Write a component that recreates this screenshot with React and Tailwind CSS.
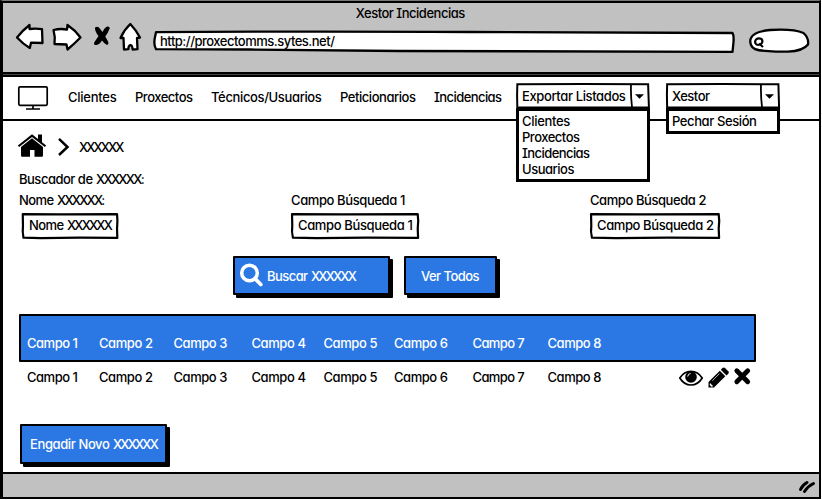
import { useLayoutEffect, useRef, useState } from "react";

/* One run of text whose tracking is tuned so that it fills `w` pixels. */
function T({ w, children, className = "" }) {
  const ref = useRef(null);
  const [gap, setGap] = useState(0);
  useLayoutEffect(() => {
    const natural = ref.current.getBoundingClientRect().width;
    setGap((w - 0.5 - natural) / children.length);
  }, []);
  return (
    <span className={`block h-4 shrink-0 whitespace-pre text-left leading-4 ${className}`} style={{ width: w }}>
      <span ref={ref} style={{ letterSpacing: gap }}>{children}</span>
    </span>
  );
}

/* Hand-drawn rectangle behind a field. */
function Sketch() {
  return (
    <svg className="absolute inset-0 h-full w-full overflow-visible" viewBox="0 0 100 100" preserveAspectRatio="none">
      <path
        d="M.8 4 L40 5 L99 4 Q99.800 30 99 60 L99.300 96 L60 95 L20 96.500 L1.500 95 Q.3 70 1 50Z"
        fill="#fff"
        stroke="#000"
        strokeWidth="2.200"
        strokeLinejoin="round"
        vectorEffect="non-scaling-stroke"
      />
    </svg>
  );
}

function Toolbar() {
  const line = { fill: "#fff", stroke: "#000", strokeWidth: 2.3, strokeLinejoin: "round" };
  return (
    <div className="flex h-9 shrink-0">
      <svg className="ml-[11px] h-9 w-8 shrink-0" viewBox="14 20 32 36">
        <path {...line} d="M17 37.5 Q23 30 29.5 25 L29.5 29 Q36 28.2 42 29.2 L42.5 43 L31 42.7 L29.8 48 Q23 44 17 37.5Z" />
      </svg>
      <svg className="ml-1 h-9 w-9 shrink-0" viewBox="50 20 36 36">
        <path {...line} d="M53.5 30 Q60 28.3 67 29.5 L67.5 25 Q75 30 80.5 37.5 Q74 44 67.5 49.5 L66.5 44.5 L54.5 44 Q55.5 37 53.5 30Z" />
      </svg>
      <svg className="ml-1 h-9 w-7 shrink-0" viewBox="90 20 28 36">
        <path d="M95 27.500 Q98 25.500 99.800 28.500 L102.500 32 Q104 28.500 106.500 26.800 Q109.500 26 109.800 28.300 Q108 33 105.300 36.500 L108.300 42 Q109 44.500 107 45 Q104.500 44 102 40.500 Q99.500 44.500 96.500 45 Q93.500 45.500 94.200 42.500 L98.500 36 Q94.500 31 95 27.500Z" />
      </svg>
      <svg className="h-9 w-7 shrink-0" viewBox="118 20 28 36">
        <path {...line} d="M130.300 24 Q136 30 140 37.500 L137 38 L137.500 49.200 L132.600 49.500 Q132.500 45.500 130.500 45 Q128.300 45.500 128.400 49.200 L124 49.500 L123.500 38 L120.500 38 Q124 30 130.300 24Z" />
      </svg>
      <div className="relative ml-[9px] mt-[11px] flex h-[21px] w-[579px] shrink-0 items-start pl-[5px] pt-[1.500px]">
        <svg className="absolute inset-0 h-full w-full overflow-visible" viewBox="155 31 579 21">
          <path {...line} d="M156 32.200 Q300 31 470 32 L732.500 33 Q734 35 733.500 42 L732.500 51.800 Q500 51.300 400 51 L250 49.500 L156 49.200 Q153.500 45 154.800 38Z" />
        </svg>
        <T w={175} className="relative">http://proxectomms.sytes.net/</T>
      </div>
      <svg className="ml-3.5 h-9 w-[64px] shrink-0" viewBox="748 20 64 36">
        <path {...line} d="M751 38 Q754 31.500 770 30 Q793 28.500 803.500 33 Q809 38 808 44.500 Q803 51 788 51.700 Q775 51.700 765 50.800 Q753 50.500 751 45 Q749.500 41 751 38Z" />
        <path d="M761.500 39 Q758.500 37.500 756 39.500 Q754 42.500 756.500 44.500 Q760 45.500 762 42.800 Q763 41 761.500 39Z M759 43.500 L763 47" fill="none" stroke="#000" strokeWidth="2.200" />
      </svg>
    </div>
  );
}

function Select({ label, labelW, options, box, menu, arrow }) {
  return (
    <div className={`relative h-[25px] shrink-0 ${box}`}>
      <svg className="absolute inset-0 h-full w-full overflow-visible" viewBox="0 0 100 100" preserveAspectRatio="none">
        <path d="M1 5 L50 4 L98.600 5 L99.200 98 L1 98 L.8 50Z" fill="#fff" stroke="#000" strokeWidth="2" vectorEffect="non-scaling-stroke" />
      </svg>
      <div className="relative flex h-[25px] pl-[6px] pt-[5px]">
        <T w={labelW}>{label}</T>
      </div>
      <svg className={`absolute top-0 h-[25px] w-[18px] ${arrow}`} viewBox="0 0 18 25">
        <path d="M1 1 Q.6 12 2 24" fill="none" stroke="#000" strokeWidth="1.800" />
        <path d="M5 11.300 H14 L9.500 15.800Z" />
      </svg>
      <div className={`absolute left-0 top-[25px] z-10 flex flex-col border-[3px] border-black bg-white pl-[3px] ${menu}`}>
        {options.map(([text, w]) => (
          <T key={text} w={w}>{text}</T>
        ))}
      </div>
    </div>
  );
}

function Nav() {
  return (
    <nav className="flex h-[44px] shrink-0 border-b-2 border-black">
      <svg className="ml-[14px] mt-[8px] h-[26px] w-8 shrink-0" viewBox="17 85 32 26">
        <rect x="18.800" y="86.900" width="28.400" height="18.400" rx="1.200" fill="#fff" stroke="#000" strokeWidth="1.700" />
        <path d="M33 105.500 V108.500 M26 109 H40" stroke="#000" strokeWidth="1.700" fill="none" />
      </svg>
      <div className="ml-[19px] flex pt-[12px]">
        <T w={49}>Clientes</T>
        <T w={58} className="ml-[18px]">Proxectos</T>
        <T w={111} className="ml-[18px]">Técnicos/Usuarios</T>
        <T w={76} className="ml-[18px]">Peticionarios</T>
        <T w={68} className="ml-[18px]">Incidencias</T>
      </div>
      <div className="ml-[14px] flex gap-4 pt-[6px]">
        <Select
          label="Exportar Listados"
          labelW={104}
          box="w-[134px]"
          arrow="left-[114px]"
          menu="h-[74px] w-[134px] pt-[2px]"
          options={[["Clientes", 48.500], ["Proxectos", 58], ["Incidencias", 68], ["Usuarios", 52.500]]}
        />
        <Select
          label="Xestor"
          labelW={38}
          box="w-[114px]"
          arrow="left-[94px]"
          menu="h-[26px] w-[114px] pt-[2px]"
          options={[["Pechar Sesión", 85]]}
        />
      </div>
    </nav>
  );
}

function Breadcrumb() {
  return (
    <div className="flex h-[26px] items-center">
      <svg className="ml-[13px] h-[26px] w-[30px] shrink-0" viewBox="17 133 30 26">
        <path d="M21 147 L32 138.200 L43 147 V155.500 Q43 156.700 41.800 156.700 H34.500 V150 H30 V156.700 H22.200 Q21 156.700 21 155.500Z" />
        <path d="M18.500 146.300 L32 135.600 L45.500 146.300" fill="none" stroke="#000" strokeWidth="2.100" />
        <path d="M38 134.500 H42 V143.500 L38 140.300Z" />
      </svg>
      <svg className="ml-[10px] h-[26px] w-3.5 shrink-0" viewBox="57 133 14 26">
        <path d="M59 138.800 L67.500 147 L59 155" fill="none" stroke="#000" strokeWidth="2.500" />
      </svg>
      <T w={44} className="ml-[8px] mt-0.5">XXXXXX</T>
    </div>
  );
}

function Field({ className, box, children }) {
  return (
    <div className={`relative h-[26px] shrink-0 ${className}`}>
      <Sketch />
      <div className={`relative flex pt-[4px] ${box}`}>{children}</div>
    </div>
  );
}

function Button({ className, children }) {
  return (
    <button className={`flex shrink-0 items-center rounded-[1px] border-2 border-black bg-[#2b78e4] text-white shadow-[3px_3px_0_#000] ${className}`}>
      {children}
    </button>
  );
}

const widths = [51, 54, 54, 54.500, 54, 54, 52, 54];
function Columns() {
  return (
    <div className="grid grid-cols-[72px_74.500px_78px_72px_70.500px_78.500px_75px_60px]">
      {widths.map((w, i) => (
        <T key={i} w={w}>{`Campo ${i + 1}`}</T>
      ))}
    </div>
  );
}

function RowActions() {
  return (
    <svg className="ml-auto mt-0.5 h-6 w-[74px] shrink-0" viewBox="678 367 74 24">
      <path d="M679.800 379 Q684 372.300 691 372.300 Q698 372.300 702.200 379 Q698 386 691 386 Q684 386 679.800 379Z" fill="#fff" stroke="#000" strokeWidth="1.700" />
      <circle cx="691" cy="378" r="5.800" />
      <path d="M687.700 377.500 Q688 374.800 690.600 374.500" fill="none" stroke="#fff" strokeWidth="1" />
      <path d="M708.500 388.500 V383 L719.800 371.700 L725.300 377.200 L714 388.500Z" />
      <path d="M720.800 370.700 L722.500 369 Q723.700 368 725 369 L728.300 372.300 Q729.300 373.500 728.300 374.700 L726.500 376.400Z" />
      <path d="M710 384 L713 387 L711.800 388 L709.700 386Z" fill="#fff" />
      <path d="M712.300 381.800 L719.500 374.600" stroke="#fff" strokeWidth=".7" />
      <path d="M736.800 371.800 L747.700 382.700 M747.700 371.800 L736.800 382.700" stroke="#000" strokeWidth="4.800" strokeLinecap="round" />
    </svg>
  );
}

export default function App() {
  return (
    <div className="flex h-[500px] w-[822px] flex-col overflow-hidden bg-white font-['Inter','Liberation_Sans',sans-serif] text-[13px] font-medium text-black [font-feature-settings:'cv11','cv08','calt'_0]">
      <div className="flex h-[499px] w-[821px] flex-col border-b-2 border-l-[3px] border-r-2 border-t border-black border-t-[#777]">
        <header className="flex h-[73px] shrink-0 flex-col border-b-2 border-t-2 border-black bg-[#c1c1c1]">
          <div className="flex h-[17px] justify-center pt-[2px]">
            <T w={109.500} className="mr-px">Xestor Incidencias</T>
          </div>
          <Toolbar />
        </header>
        <div className="h-[3px] shrink-0 border-b-2 border-black bg-[#444]" />
        <Nav />
        <main className="flex h-[351px] shrink-0 flex-col pl-px pt-[12px]">
          <Breadcrumb />
          <div className="ml-[15px] mt-[12px] flex">
            <T w={77}>Buscador de </T>
            <T w={47.500}>XXXXXX:</T>
          </div>
          <div className="ml-[15px] mt-[5px] grid grid-cols-[272px_299px_1fr]">
            <div className="flex">
              <T w={38}>Nome </T>
              <T w={47}>XXXXXX:</T>
            </div>
            <T w={114.500}>Campo Búsqueda 1</T>
            <T w={116.500}>Campo Búsqueda 2</T>
          </div>
          <div className="ml-[18px] mt-[5px] flex">
            <Field className="w-[96px]" box="pl-[7px]">
              <T w={38}>Nome </T>
              <T w={44.500}>XXXXXX</T>
            </Field>
            <Field className="ml-[173px] w-[128px]" box="pl-[7px]">
              <T w={115}>Campo Búsqueda 1</T>
            </Field>
            <Field className="ml-[171px] w-[130px]" box="pl-[7px]">
              <T w={117}>Campo Búsqueda 2</T>
            </Field>
          </div>
          <div className="ml-[229px] mt-[17px] flex gap-[14px]">
            <Button className="h-[39px] w-[157px] pl-[4px]">
              <svg className="-mt-0.5 h-6 w-6" viewBox="0 0 24 24">
                <circle cx="10.500" cy="10" r="7.800" fill="none" stroke="#fff" strokeWidth="3.500" />
                <path d="M16 15.500 L21.800 21.500" stroke="#fff" strokeWidth="3.700" strokeLinecap="round" />
              </svg>
              <T w={44} className="ml-[4px]">Buscar </T>
              <T w={44.500}>XXXXXX</T>
            </Button>
            <Button className="h-[39px] w-[93px] pl-[15px]">
              <T w={58.500}>Ver Todos</T>
            </Button>
          </div>
          <div className="ml-[15px] mt-[19px] flex h-[48px] w-[737px] shrink-0 rounded-[1px] border-[2.500px] border-black bg-[#2b78e4] pl-[6px] pt-[19px] text-white">
            <Columns />
          </div>
          <div className="ml-[23px] mt-[3px] flex h-6 w-[725px] shrink-0 items-center">
            <Columns />
            <RowActions />
          </div>
          <Button className="ml-[16px] mt-[35px] h-[40px] w-[147px] pl-[8px]">
            <T w={83}>Engadir Novo </T>
            <T w={44.500}>XXXXXX</T>
          </Button>
        </main>
        <footer className="flex flex-1 justify-end border-t-2 border-black bg-[#c1c1c1]">
          <svg className="mr-0.5 mt-[5px] h-4 w-5" viewBox="798 479 20 16">
            <path d="M801.500 489.500 Q803.500 485 808 482.500 M805.500 491.500 Q809 486 814.500 483.500" fill="none" stroke="#000" strokeWidth="3" strokeLinecap="round" />
          </svg>
        </footer>
      </div>
    </div>
  );
}
